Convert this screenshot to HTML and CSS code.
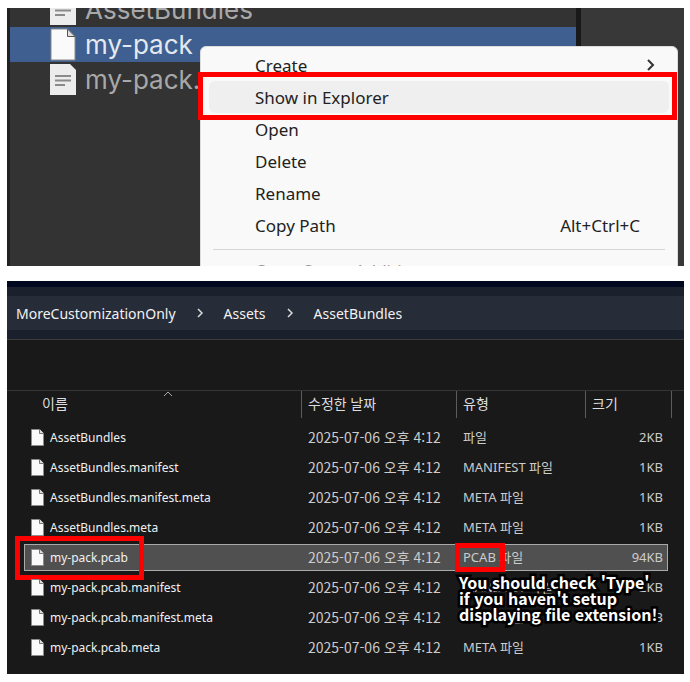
FILE: index.html
```html
<!DOCTYPE html>
<html lang="ko">
<head>
<meta charset="utf-8">
<title>AssetBundles</title>
<link rel="stylesheet" href="styles.css">
</head>
<body>
<svg width="0" height="0" class="defs" aria-hidden="true">
  <symbol id="file" viewBox="0 0 13 17"><path d="M.5.5h8l4 4v12H.5z" fill="#fafafa" stroke="#8c8c8c"/><path d="M8.5 0v4.5H13" fill="#ddd" stroke="#777"/></symbol>
  <symbol id="page" viewBox="0 0 26 33"><path d="M1 1h17l7 7v24H1z" fill="#fafafa" stroke="#8a8a8a"/><path d="M17.500 1v7.500H25z" fill="#e0e0e0" stroke="#555"/></symbol>
  <symbol id="text" viewBox="0 0 26 31"><path d="M0 0h20l6 6v25H0z" fill="#ececec"/><path d="M5 12h16M5 16.500h16M5 21h10" stroke="#8a8a8a" stroke-width="2"/></symbol>
</svg>
<main>
  <section class="project">
    <ul class="tree">
      <li><svg class="text-icon"><use href="#text"/></svg>AssetBundles</li>
      <li class="selected"><svg class="page-icon"><use href="#page"/></svg>my-pack</li>
      <li><svg class="text-icon"><use href="#text"/></svg>my-pack.pcab</li>
    </ul>
    <div class="inspector"></div>
    <div class="menu">
      <button>Create<svg class="arrow" viewBox="0 0 8 12"><path d="M1 1l5 5-5 5"/></svg></button>
      <button class="hover">Show in Explorer</button>
      <button>Open</button>
      <button>Delete</button>
      <button>Rename</button>
      <button>Copy Path<span>Alt+Ctrl+C</span></button>
      <hr>
      <button disabled>Open Scene Additive</button>
      <div class="mark mark-menu"></div>
    </div>
  </section>

  <section class="explorer">
    <div class="title"></div>
    <div class="address">
      <nav>
        <a href="#">MoreCustomizationOnly</a>
        <svg viewBox="0 0 6 10"><path d="M1 1l4 4-4 4"/></svg>
        <a href="#">Assets</a>
        <svg viewBox="0 0 6 10"><path d="M1 1l4 4-4 4"/></svg>
        <a href="#">AssetBundles</a>
      </nav>
    </div>
    <div class="toolbar"></div>
    <table>
      <thead>
        <tr>
          <th class="name">이름<svg class="sort" viewBox="0 0 10 6"><path d="M1 5l4-4 4 4"/></svg></th>
          <th class="date">수정한 날짜</th>
          <th class="type">유형</th>
          <th class="size">크기</th>
        </tr>
      </thead>
      <tbody>
        <tr><td><svg><use href="#file"/></svg>AssetBundles</td><td>2025-07-06 오후 4:12</td><td>파일</td><td>2KB</td></tr>
        <tr><td><svg><use href="#file"/></svg>AssetBundles.manifest</td><td>2025-07-06 오후 4:12</td><td>MANIFEST 파일</td><td>1KB</td></tr>
        <tr><td><svg><use href="#file"/></svg>AssetBundles.manifest.meta</td><td>2025-07-06 오후 4:12</td><td>META 파일</td><td>1KB</td></tr>
        <tr><td><svg><use href="#file"/></svg>AssetBundles.meta</td><td>2025-07-06 오후 4:12</td><td>META 파일</td><td>1KB</td></tr>
        <tr class="selected"><td><svg><use href="#file"/></svg>my-pack.pcab<div class="mark mark-name"></div></td><td>2025-07-06 오후 4:12</td><td>PCAB 파일<div class="mark mark-type"></div><p class="note">You should check 'Type'<br>if you haven't setup<br>displaying file extension!</p></td><td>94KB</td></tr>
        <tr><td><svg><use href="#file"/></svg>my-pack.pcab.manifest</td><td>2025-07-06 오후 4:12</td><td>MANIFEST 파일</td><td>2KB</td></tr>
        <tr><td><svg><use href="#file"/></svg>my-pack.pcab.manifest.meta</td><td>2025-07-06 오후 4:12</td><td>META 파일</td><td>1KB</td></tr>
        <tr><td><svg><use href="#file"/></svg>my-pack.pcab.meta</td><td>2025-07-06 오후 4:12</td><td>META 파일</td><td>1KB</td></tr>
      </tbody>
    </table>
  </section>
</main>
</body>
</html>
```
FILE: styles.css
```css
* { box-sizing: border-box; }
body {
  margin: 0;
  background: #fff;
  font-family: "Noto Sans", "Noto Sans CJK KR", sans-serif;
}
.defs { position: absolute; }
main {
  display: flex;
  flex-direction: column;
  gap: 15px;
  padding: 8px 6px 8px 7px;
}
.mark {
  position: absolute;
  border: 5px solid #f00;
  pointer-events: none;
}

.project {
  position: relative;
  display: flex;
  height: 258px;
  overflow: hidden;
  background: #333;
}
.tree {
  flex: 1;
  margin: -16px 0 0;
  padding: 0;
  list-style: none;
  border-left: 3px solid #222;
  font: 26px/35px Inter, sans-serif;
  color: #a8a8a8;
}
.tree li {
  display: flex;
  align-items: center;
  height: 35px;
  gap: 9px;
  padding-left: 40px;
}
.tree .selected { background: #3e5f90; color: #e4e9f0; }
.text-icon { width: 26px; height: 31px; }
.page-icon { width: 26px; height: 33px; }
.inspector {
  width: 108px;
  border-left: 5px solid #191919;
  background: #383838;
}

.menu {
  position: absolute;
  top: 38px;
  left: 193px;
  right: 6px;
  padding: 2px 8px;
  border: 1px solid #ddd;
  border-radius: 6px 6px 0 0;
  background: #f9f9f9;
}
.menu button {
  display: flex;
  align-items: center;
  justify-content: space-between;
  width: 100%;
  height: 32px;
  padding: 0 29px 0 46px;
  border: 0;
  border-radius: 6px;
  background: none;
  font: inherit;
  font-size: 17px;
  color: #222;
}
.menu .hover { background: #efefef; }
.menu button:disabled { color: #999; }
.menu hr {
  height: 1px;
  margin: 8px 4px 4px;
  border: 0;
  background: #d6d6d6;
}
.arrow {
  width: 8px;
  height: 12px;
  margin-right: -15px;
  fill: none;
  stroke: #333;
  stroke-width: 2;
}
.mark-menu { top: 25px; left: -3px; right: 0; height: 48px; }

.explorer { background: #191919; color: #ddd; padding-bottom: 10px; }
.title { height: 6px; background: #000820; }
.address {
  padding: 9px 0;
  background: #1b202d;
  border-bottom: 1px solid #3c3c3c;
}
nav {
  display: flex;
  align-items: center;
  gap: 21px;
  height: 34px;
  padding-left: 9px;
  background: #272c39;
}
nav a {
  padding-top: 2px;
  font-size: 14px;
  line-height: 20px;
  color: #f2f2f2;
  text-decoration: none;
}
nav svg { width: 6px; height: 10px; fill: none; stroke: #ddd; stroke-width: 1.5; }
.toolbar { height: 51px; border-bottom: 1px solid #363636; }

table {
  width: calc(100% - 33px);
  margin: -3px 16px 0 17px;
  border-spacing: 0 3px;
  table-layout: fixed;
  font-size: 13px;
  line-height: 20px;
}
th, td {
  position: relative;
  height: 27px;
  padding: 0 0 0 7px;
  text-align: left;
  font-weight: 400;
  white-space: nowrap;
}
th {
  height: 30px;
  padding-bottom: 4px;
  font-size: 14px;
  background: linear-gradient(#5c5c5c, #5c5c5c) no-repeat 0 0 / 1px 27px;
}
th.name { padding-left: 18px; background: none; }
.date { width: 155px; }
.type { width: 129px; }
.size { width: 83px; }
th.size::after {
  content: "";
  position: absolute;
  top: 0;
  right: -4px;
  width: 1px;
  height: 27px;
  background: #5c5c5c;
}
.sort {
  position: absolute;
  top: 0;
  left: 139px;
  width: 10px;
  height: 6px;
  fill: none;
  stroke: #aaa;
}
td { padding-bottom: 1px; color: #ccc; }
td svg { width: 13px; height: 17px; margin-right: 6px; vertical-align: -4px; }
td:first-child { color: #f0f0f0; font-size: 12px; padding-bottom: 0; }
td:nth-child(2) { font-size: 14px; font-family: "Noto Sans CJK KR", sans-serif; }
td:last-child { text-align: right; padding: 0 5px 1px 0; }
tr.selected td {
  background: #505050;
  border: 1px solid #aaa;
  border-width: 1px 0;
}
tr.selected td:first-child { padding-left: 6px; border-left-width: 1px; }
tr.selected td:last-child { padding-right: 4px; border-right-width: 1px; }
.mark-name { top: -9px; left: -10px; width: 129px; height: 44px; }
.mark-type { top: -2px; left: -1px; width: 50px; height: 29px; }
.note {
  position: absolute;
  z-index: 1;
  top: 29px;
  left: 3px;
  margin: 0;
  font: 700 16px/16px "Noto Sans CJK KR", sans-serif;
  color: #fff;
  -webkit-text-stroke: 5px #000;
  paint-order: stroke fill;
}
```
